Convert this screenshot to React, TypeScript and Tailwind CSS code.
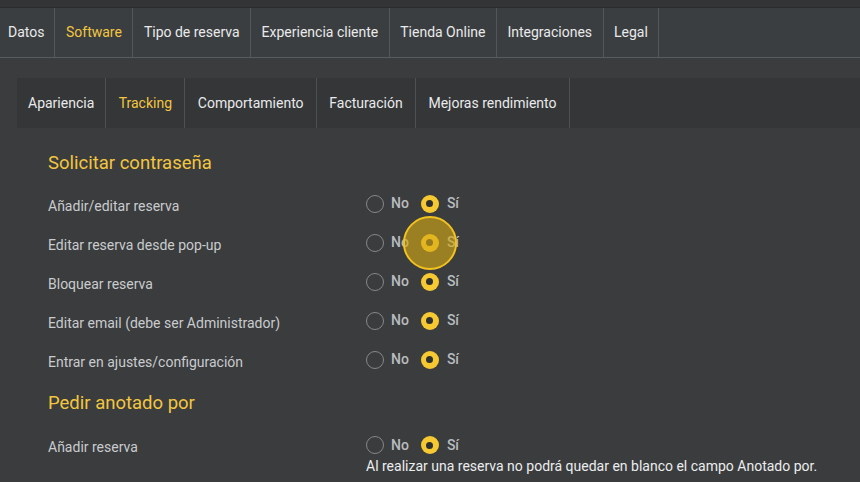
import React from 'react'

const mainTabs = ['Datos', 'Software', 'Tipo de reserva', 'Experiencia cliente', 'Tienda Online', 'Integraciones', 'Legal']
const subTabs = ['Apariencia', 'Tracking', 'Comportamiento', 'Facturación', 'Mejoras rendimiento']

const passwordRows = [
  'Añadir/editar reserva',
  'Editar reserva desde pop-up',
  'Bloquear reserva',
  'Editar email (debe ser Administrador)',
  'Entrar en ajustes/configuración',
]

function YesNo({ clicked = false }: { clicked?: boolean }) {
  return (
    <div className="flex items-center h-[20px]">
      <span className="w-[18px] h-[18px] rounded-full border-[1.5px] border-[#85888a]" />
      <span className="ml-[7px] text-[14px] font-medium text-[#b9bcbe]">No</span>
      <span className="relative ml-[12px] w-[18px] h-[18px] rounded-full bg-[#f6c831] flex items-center justify-center">
        <span className="w-[7px] h-[7px] rounded-full bg-[#2e2f30]" />
        {clicked && (
          <span className="absolute left-1/2 top-1/2 -translate-x-1/2 -translate-y-1/2 w-[54px] h-[54px] rounded-full bg-[rgba(214,170,20,0.62)] border-2 border-[#f2c21e]" />
        )}
      </span>
      <span className="ml-[8px] text-[14px] font-medium text-[#b9bcbe]">Sí</span>
    </div>
  )
}

export default function App() {
  return (
    <div className="w-[860px] h-[482px] overflow-hidden bg-[#3a3c3e] font-['Roboto',sans-serif]">
      {/* top strip */}
      <div className="h-[8px] bg-[#323436] border-b border-[#2a2b2c]" />

      {/* main tabs */}
      <div className="flex h-[50px] bg-[#3b3e40] border-b border-[#595c5e]">
        {mainTabs.map((t, i) => (
          <div
            key={t}
            className={`flex items-center text-[14px] border-r border-[#54575a] ${i === 0 ? 'pl-[8px] pr-[10px]' : 'px-[10.5px]'} ${t === 'Software' ? 'text-[#f3c63f]' : 'text-[#e9eaeb]'}`}
          >
            {t}
          </div>
        ))}
      </div>

      {/* sub tabs */}
      <div className="pt-[20px] pl-[17px]">
        <div className="flex h-[50px] bg-[#343638]">
          {subTabs.map((t, i) => (
            <div
              key={t}
              className={`flex items-center text-[14px] border-r border-[#4e5153] ${i === 0 ? 'pl-[11px] pr-[11px]' : 'px-[12.4px]'} ${t === 'Tracking' ? 'text-[#f3c63f]' : 'text-[#e9eaeb]'}`}
            >
              {t}
            </div>
          ))}
        </div>
      </div>

      {/* content */}
      <div className="pl-[48px]">
        <h2 className="mt-[23px] h-[24px] leading-[24px] text-[18.5px] text-[#f3c63f]">Solicitar contraseña</h2>
        <div className="mt-[12px]">
          {passwordRows.map((r, i) => (
            <div key={r} className="flex items-center h-[39px]">
              <div className="w-[318px] text-[14px] text-[#c9cbcd]">{r}</div>
              <div className="mb-[6px]">
                <YesNo clicked={i === 1} />
              </div>
            </div>
          ))}
        </div>

        <h2 className="mt-[9px] h-[24px] leading-[24px] text-[18.5px] text-[#f3c63f]">Pedir anotado por</h2>
        <div className="mt-[20px] flex items-start">
          <div className="w-[318px] mt-[2px] h-[20px] leading-[20px] text-[14px] text-[#c9cbcd]">Añadir reserva</div>
          <div>
            <YesNo />
            <div className="mt-[1px] leading-[20px] text-[14px] text-[#eceded]">
              Al realizar una reserva no podrá quedar en blanco el campo Anotado por.
            </div>
          </div>
        </div>
      </div>
    </div>
  )
}
